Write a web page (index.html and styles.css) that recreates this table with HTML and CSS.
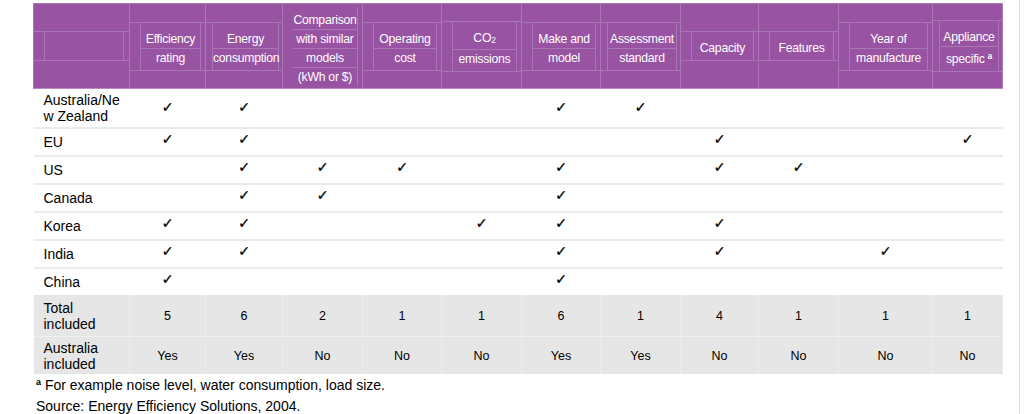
FILE: index.html
```html
<!DOCTYPE html>
<html lang="en">
<head>
<meta charset="utf-8">
<title>Energy label content comparison</title>
<link rel="stylesheet" href="styles.css">
</head>
<body>
<div class="page">
<table class="t">
<colgroup>
<col class="c0"><col class="c1"><col class="c2"><col class="c3"><col class="c4"><col class="c5"><col class="c6"><col class="c7"><col class="c8"><col class="c9"><col class="c10"><col class="c11">
</colgroup>
<thead>
<tr>
<th><div class="hb"><div class="hi first"><div class="hl">&nbsp;</div></div></div></th>
<th><div class="hb"><div class="hi"><div class="hl">Efficiency</div><div class="hl">rating</div></div></div></th>
<th><div class="hb"><div class="hi wide"><div class="hl">Energy</div><div class="hl">consumption</div></div></div></th>
<th><div class="hb open"><div class="hi open"><div class="hl">Comparison</div><div class="hl">with similar</div><div class="hl">models</div><div class="hl">(kWh or $)</div></div></div></th>
<th><div class="hb"><div class="hi"><div class="hl">Operating</div><div class="hl">cost</div></div></div></th>
<th><div class="hb"><div class="hi"><div class="hl">CO<sub>2</sub></div><div class="hl">emissions</div></div></div></th>
<th><div class="hb"><div class="hi"><div class="hl">Make and</div><div class="hl">model</div></div></div></th>
<th><div class="hb"><div class="hi wide"><div class="hl">Assessment</div><div class="hl">standard</div></div></div></th>
<th><div class="hb"><div class="hi"><div class="hl">Capacity</div></div></div></th>
<th><div class="hb"><div class="hi"><div class="hl">Features</div></div></div></th>
<th><div class="hb"><div class="hi"><div class="hl">Year of</div><div class="hl">manufacture</div></div></div></th>
<th><div class="hb"><div class="hi wide"><div class="hl">Appliance</div><div class="hl">specific<sup>a</sup></div></div></div></th>
</tr>
</thead>
<tbody>
<tr class="tall">
<td class="lbl">Australia/Ne<br>w Zealand</td>
<td><span class="ck">✓</span></td><td><span class="ck">✓</span></td><td></td><td></td><td></td><td><span class="ck">✓</span></td><td><span class="ck">✓</span></td><td></td><td></td><td></td><td></td>
</tr>
<tr>
<td class="lbl">EU</td>
<td><span class="ck">✓</span></td><td><span class="ck">✓</span></td><td></td><td></td><td></td><td></td><td></td><td><span class="ck">✓</span></td><td></td><td></td><td><span class="ck">✓</span></td>
</tr>
<tr>
<td class="lbl">US</td>
<td></td><td><span class="ck">✓</span></td><td><span class="ck">✓</span></td><td><span class="ck">✓</span></td><td></td><td><span class="ck">✓</span></td><td></td><td><span class="ck">✓</span></td><td><span class="ck">✓</span></td><td></td><td></td>
</tr>
<tr>
<td class="lbl">Canada</td>
<td></td><td><span class="ck">✓</span></td><td><span class="ck">✓</span></td><td></td><td></td><td><span class="ck">✓</span></td><td></td><td></td><td></td><td></td><td></td>
</tr>
<tr>
<td class="lbl">Korea</td>
<td><span class="ck">✓</span></td><td><span class="ck">✓</span></td><td></td><td></td><td><span class="ck">✓</span></td><td><span class="ck">✓</span></td><td></td><td><span class="ck">✓</span></td><td></td><td></td><td></td>
</tr>
<tr>
<td class="lbl">India</td>
<td><span class="ck">✓</span></td><td><span class="ck">✓</span></td><td></td><td></td><td></td><td><span class="ck">✓</span></td><td></td><td><span class="ck">✓</span></td><td></td><td><span class="ck">✓</span></td><td></td>
</tr>
<tr class="last">
<td class="lbl">China</td>
<td><span class="ck">✓</span></td><td></td><td></td><td></td><td></td><td><span class="ck">✓</span></td><td></td><td></td><td></td><td></td><td></td>
</tr>
<tr class="tot">
<td class="lbl">Total included</td>
<td>5</td><td>6</td><td>2</td><td>1</td><td>1</td><td>6</td><td>1</td><td>4</td><td>1</td><td>1</td><td>1</td>
</tr>
<tr class="tot aus">
<td class="lbl">Australia included</td>
<td>Yes</td><td>Yes</td><td>No</td><td>No</td><td>No</td><td>Yes</td><td>Yes</td><td>No</td><td>No</td><td>No</td><td>No</td>
</tr>
</tbody>
</table>
<div class="notes">
<p><sup>a</sup> For example noise level, water consumption, load size.</p>
<p>Source: Energy Efficiency Solutions, 2004.</p>
</div>
</div>
</body>
</html>
```

FILE: styles.css
```css
html, body {
  margin: 0;
  padding: 0;
  background: #ffffff;
}

.page {
  width: 1020px;
  height: 414px;
  border-right: 1px solid #dcdcdc;
  box-sizing: border-box;
  padding-top: 3px;
  font-family: "Liberation Sans", Arial, sans-serif;
  color: #000;
}

.t {
  border-collapse: collapse;
  table-layout: fixed;
  width: 969px;
  margin-left: 33px;
}

.c0 { width: 96px; }
.c1 { width: 76px; }
.c2 { width: 77px; }
.c3 { width: 80px; }
.c4 { width: 79px; }
.c5 { width: 80px; }
.c6 { width: 79px; }
.c7 { width: 80px; }
.c8 { width: 78px; }
.c9 { width: 80px; }
.c10 { width: 94px; }
.c11 { width: 70px; }

thead tr {
  height: 85px;
}

thead th {
  background: #9853a2;
  color: #ffffff;
  font-family: "Liberation Sans", Arial, sans-serif;
  font-weight: normal;
  font-size: 12.2px;
  letter-spacing: -0.25px;
  padding: 0;
  vertical-align: middle;
  text-align: center;
  border-left: 1px solid #ab77b5;
  border-right: 1px solid #ab77b5;
  border-top: 1px solid #ab77b5;
  border-bottom: 1px solid #b88ac0;
}

.hb {
  border-top: 1px solid #aa75b4;
  border-bottom: 1px solid #aa75b4;
}

.hb.open {
  border-color: transparent;
}

.hi {
  margin: 0 4px 0 10px;
  border-left: 1px solid #aa75b4;
  border-right: 1px solid #aa75b4;
  padding: 7px 0 3px;
}

.hi.wide {
  margin: 0 3px 0 6px;
}

.hi.first {
  margin: 0 5px 0 10px;
}

.hi.open {
  border-left-color: transparent;
  margin: 0 4px 0 9px;
  padding: 4px 0 0;
}

.hl {
  line-height: 18px;
  white-space: nowrap;
}

.hl + .hl {
  border-top: 1px solid #aa75b4;
}

.hl sub {
  font-size: 8.5px;
  vertical-align: -1px;
}

.hl sup {
  font-size: 8.5px;
  font-weight: bold;
  vertical-align: 4px;
  margin-left: 3px;
}

tbody td {
  padding: 0;
  height: 26px;
  font-size: 14px;
  text-align: center;
  vertical-align: middle;
  border-bottom: 2px solid #ebebeb;
}

tbody tr.tall td {
  height: 38px;
}

tbody tr.last td {
  border-bottom: none;
}

td.lbl {
  text-align: left;
  padding: 0 4px 0 10px;
  line-height: 16px;
}

.ck {
  font-family: "DejaVu Sans", sans-serif;
  font-size: 14px;
  -webkit-text-stroke: 0.35px #000;
  position: relative;
  top: -3px;
}

tr.tall .ck {
  top: -1px;
}

tr.tot td {
  background: #e6e6e6;
  font-size: 12.5px;
  height: 41px;
  border-right: 1px solid #ececec;
  border-bottom: 1px solid #f0f0f0;
}

tr.tot td.lbl {
  font-size: 14px;
}

tr.tot.aus td {
  height: 37px;
  border-bottom: none;
}

.notes {
  margin: 1px 0 0 36px;
  font-size: 14px;
  line-height: 21px;
}

.notes p {
  margin: 0;
}

.notes sup {
  font-size: 9px;
  font-weight: bold;
  vertical-align: 5px;
  line-height: 0;
}
```
